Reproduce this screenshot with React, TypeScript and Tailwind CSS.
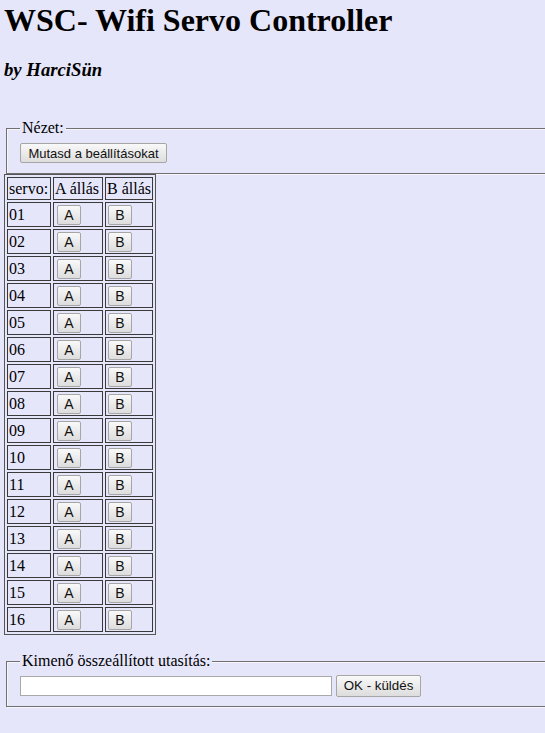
export default function App() {
  const rows = Array.from({ length: 16 }, (_, i) => String(i + 1).padStart(2, "0"));
  const btnBase =
    "font-['Liberation_Sans',Arial,sans-serif] leading-none text-[#111] bg-gradient-to-b from-[#f9f9f9] to-[#dddddd] border border-[#a6a6a6] rounded-[2px] flex items-center justify-center";
  const btn = btnBase + " text-[14px]";
  const fs =
    "ml-[2px] mr-[-20px] border border-[#707070] shadow-[inset_1px_1px_0_#f6f6fc,1px_1px_0_#f6f6fc] px-[13px]";
  const legend = "px-[2px] bg-[#e6e6fa] text-[16px] leading-[18px]";
  const cell = "border border-[#3a3a3a] p-[1px] text-left align-middle";
  return (
    <div className="min-h-screen w-full overflow-hidden bg-[#e6e6fa] pl-[4px] pb-[20px] font-['Liberation_Serif','Times_New_Roman',serif] text-black">
      <h1 className="pt-[2px] text-[32px] font-bold leading-[37px]">WSC- Wifi Servo Controller</h1>
      <h3 className="mt-[20px] text-[18.72px] font-bold italic leading-[22px]">by HarciSün</h3>

      <fieldset className={fs + " mt-[38px] pt-[6px] pb-[10px]"}>
        <legend className={legend}>Nézet:</legend>
        <button className={btnBase + " text-[13px] h-[20px] w-[147px]"}>Mutasd a beállításokat</button>
      </fieldset>

      <table className="border-separate border-spacing-[2px] border border-[#555555] text-[16px]">
        <thead>
          <tr>
            <th className={cell + " w-[44px] font-normal leading-[19px]"}>servo:</th>
            <th className={cell + " w-[50px] font-normal leading-[19px]"}>A állás</th>
            <th className={cell + " w-[48px] font-normal leading-[19px]"}>B állás</th>
          </tr>
        </thead>
        <tbody>
          {rows.map((r) => (
            <tr key={r}>
              <td className={cell}>
                <div className="flex h-[21px] items-center leading-[18px]">{r}</div>
              </td>
              <td className={cell}>
                <div className="flex h-[21px] items-center">
                  <button className={btn + " ml-[2px] h-[20px] w-[24px]"}>A</button>
                </div>
              </td>
              <td className={cell}>
                <div className="flex h-[21px] items-center">
                  <button className={btn + " ml-[1px] h-[20px] w-[24px]"}>B</button>
                </div>
              </td>
            </tr>
          ))}
        </tbody>
      </table>

      <fieldset className={fs + " mt-[17px] pt-[5px] pb-[9px]"}>
        <legend className={legend}>Kimenő összeállított utasítás:</legend>
        <div className="flex items-center gap-[4px]">
          <input
            type="text"
            className="h-[20px] w-[312px] border border-[#a9a9a9] bg-white px-[2px] text-[13.33px] outline-none"
          />
          <button className={btnBase + " text-[13.33px] h-[22px] w-[85px]"}>OK - küldés</button>
        </div>
      </fieldset>
    </div>
  );
}
